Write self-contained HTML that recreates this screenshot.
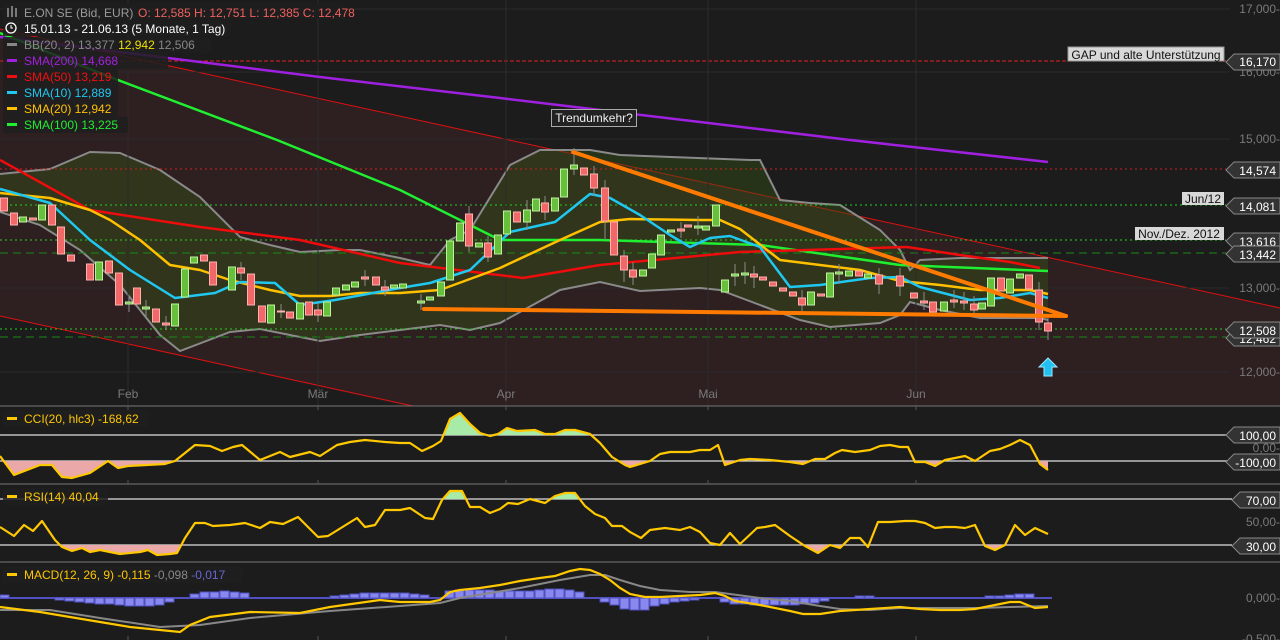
<!DOCTYPE html>
<html><head><meta charset="utf-8"><style>
html,body{margin:0;padding:0;background:#1c1c1c;width:1280px;height:640px;overflow:hidden}
svg{display:block;font-family:"Liberation Sans",sans-serif}
.r{fill:#f06868;stroke:#ffb0b0;stroke-width:1}
.g{fill:#66c03c;stroke:#c0f0a0;stroke-width:1}
.ax{fill:#7a7a7a;font-size:12px;text-anchor:end}
.tg{fill:#333;stroke:#888;stroke-width:1}
.tt{fill:#fff;font-size:12px;text-anchor:end}
.lg{font-size:12px}
</style></head><body>
<svg width="1280" height="640" viewBox="0 0 1280 640">
<defs>
<clipPath id="price"><rect x="0" y="0" width="1280" height="406"/></clipPath>
<clipPath id="cciL"><rect x="0" y="461" width="1280" height="23"/></clipPath>
<clipPath id="cciH"><rect x="0" y="406" width="1280" height="29"/></clipPath>
<clipPath id="rsiL"><rect x="0" y="545" width="1280" height="17"/></clipPath>
<clipPath id="rsiH"><rect x="0" y="484" width="1280" height="15"/></clipPath>
</defs>
<rect width="1280" height="640" fill="#1c1c1c"/>
<g clip-path="url(#price)">
<!-- channel -->
<polygon points="0,29 1280,308 1280,600 0,316" fill="#2e1f21"/>
<line x1="0" y1="29" x2="1280" y2="308" stroke="#e01010" stroke-width="1"/>
<line x1="0" y1="316" x2="1280" y2="595" stroke="#e01010" stroke-width="1"/>
<!-- grid -->
<g stroke="#2a2a2a" stroke-width="1">
<line x1="0" y1="9" x2="1230" y2="9"/><line x1="0" y1="72" x2="1230" y2="72"/><line x1="0" y1="139" x2="1230" y2="139"/><line x1="0" y1="288" x2="1230" y2="288"/><line x1="0" y1="372" x2="1230" y2="372"/>
</g>
<!-- BB fill -->
<polygon fill="rgba(50,80,20,0.45)" points="0,174 50,169 90,152 120,153 160,170 200,197 240,237 270,245 300,252 340,250 360,250 400,258 430,265 450,240 470,230 510,165 540,150 590,150 620,155 750,160 760,160 780,200 810,203 840,205 880,230 900,250 910,270 920,260 960,258 1020,258 1048,258 1048,320 1040,318 1000,318 980,318 940,310 910,302 900,315 880,323 830,327 800,320 760,305 720,290 700,288 640,291 600,282 560,290 500,323 470,330 440,325 400,330 360,335 320,341 260,329 230,332 180,351 160,335 120,285 80,250 40,225 0,212"/>
<g fill="none" stroke="#8a8a8a" stroke-width="2">
<polyline points="0,174 50,169 90,152 120,153 160,170 200,197 240,237 270,245 300,252 340,250 360,250 400,258 430,265 450,240 470,230 510,165 540,150 590,150 620,155 750,160 760,160 780,200 810,203 840,205 880,230 900,250 910,270 920,260 960,258 1020,258 1048,258"/>
<polyline points="0,212 40,225 80,250 120,285 160,335 180,351 230,332 260,329 320,341 360,335 400,330 440,325 470,330 500,323 560,290 600,282 640,291 700,288 720,290 760,305 800,320 830,327 880,323 900,315 910,302 940,310 980,318 1000,318 1040,318 1048,320"/>
</g>
<!-- horizontal level lines -->
<line x1="0" y1="61" x2="1226" y2="61" stroke="#e02020" stroke-dasharray="4,2"/>
<line x1="0" y1="169" x2="1226" y2="169" stroke="#d02020" stroke-dasharray="2,3"/>
<g stroke="#20d020" stroke-dasharray="2,3"><line x1="0" y1="205" x2="1226" y2="205"/><line x1="0" y1="240" x2="1226" y2="240"/><line x1="0" y1="329" x2="1226" y2="329"/></g>
<g stroke="#1a8a1a" stroke-dasharray="8,5"><line x1="0" y1="253" x2="1226" y2="253"/><line x1="0" y1="337" x2="1226" y2="337"/></g>
<!-- vertical grid -->
<g stroke="#2c2c2c"><line x1="128" y1="0" x2="128" y2="406"/><line x1="318" y1="0" x2="318" y2="406"/><line x1="506" y1="0" x2="506" y2="406"/><line x1="708" y1="0" x2="708" y2="406"/><line x1="916" y1="0" x2="916" y2="406"/></g>
<!-- MAs -->
<g fill="none" stroke-width="2.5" stroke-linejoin="round">
<polyline stroke="#a020e0" points="0,37 320,77 500,98 700,122 850,140 1048,162"/>
<polyline stroke="#20ee30" points="0,33 110,77 277,140 400,190 500,240 600,240 760,245 900,265 1048,271"/>
<polyline stroke="#ee0c0c" points="0,160 90,210 200,227 300,240 400,263 523,278 600,265 740,252 907,247 960,255 1010,262 1040,268"/>
<polyline stroke="#ffc000" points="0,193 50,198 90,210 110,220 140,240 170,265 200,270 230,280 270,290 300,296 330,296 360,293 400,293 440,290 500,268 560,240 600,222 630,219 700,220 720,220 740,229 780,260 820,265 860,270 900,281 940,285 980,290 1030,290 1048,294"/>
<polyline stroke="#20c8f0" points="0,189 50,203 90,240 130,270 175,298 215,293 240,282 275,283 300,305 335,300 400,288 430,283 470,270 510,232 555,222 590,194 610,198 640,215 670,235 690,247 710,238 730,236 760,247 790,287 820,285 870,278 900,277 920,287 970,300 1000,298 1030,293 1048,298"/>
</g>
<!-- wicks -->
<path stroke="#8a8a8a" stroke-width="1" fill="none" d="M129,295V312M146,300V317M166,316V330M241,262V280M281,304V318M318,303V322M365,270V286M385,280V296M421,294V310M469,206V252M488,236V262M527,200V230M545,196V220M574,148V175M594,166V196M605,180V240M624,250V282M633,262V285M681,222V238M698,216V235M735,264V286M745,262V284M754,266V288M802,290V312M839,264V284M879,268V294M900,268V296M924,292V310M954,290V308M964,292V310M974,296V316M1039,282V330M1048,318V340"/>
<!-- candles -->
<rect class="r" x="0.5" y="198" width="7" height="13"/><rect class="r" x="10.5" y="213" width="7" height="12"/><rect class="g" x="19.5" y="217" width="7" height="5"/><rect class="r" x="29.5" y="218" width="7" height="2"/><rect class="g" x="38.5" y="205" width="7" height="15"/><rect class="r" x="48.5" y="205" width="7" height="20"/><rect class="r" x="57.5" y="227" width="7" height="27"/><rect class="r" x="67.5" y="255" width="7" height="6"/><rect class="r" x="86.5" y="264" width="7" height="16"/><rect class="g" x="95.5" y="262" width="7" height="18"/><rect class="r" x="105.5" y="261" width="7" height="12"/><rect class="r" x="115.5" y="273" width="7" height="32"/><rect class="g" x="125.5" y="302" width="7" height="2"/><rect class="r" x="133.5" y="288" width="7" height="16"/><rect class="g" x="142.5" y="307" width="7" height="2"/><rect class="r" x="152.5" y="309" width="7" height="13"/><rect class="r" x="162.5" y="323" width="7" height="2"/><rect class="g" x="171.5" y="304" width="7" height="22"/><rect class="g" x="181.5" y="269" width="7" height="28"/><rect class="g" x="190.5" y="257" width="7" height="6"/><rect class="r" x="200.5" y="255" width="7" height="6"/><rect class="r" x="209.5" y="262" width="7" height="23"/><rect class="g" x="228.5" y="267" width="7" height="23"/><rect class="r" x="237.5" y="268" width="7" height="5"/><rect class="r" x="247.5" y="274" width="7" height="31"/><rect class="r" x="258.5" y="306" width="7" height="16"/><rect class="g" x="267.5" y="305" width="7" height="18"/><rect class="r" x="277.5" y="311" width="7" height="1"/><rect class="r" x="286.5" y="312" width="7" height="6"/><rect class="g" x="296.5" y="303" width="7" height="16"/><rect class="r" x="305.5" y="302" width="7" height="13"/><rect class="r" x="314.5" y="310" width="7" height="5"/><rect class="g" x="323.5" y="302" width="7" height="14"/><rect class="g" x="332.5" y="288" width="7" height="7"/><rect class="g" x="342.5" y="285" width="7" height="5"/><rect class="g" x="351.5" y="282" width="7" height="5"/><rect class="r" x="361.5" y="277" width="7" height="2"/><rect class="r" x="372.5" y="277" width="7" height="8"/><rect class="r" x="381.5" y="287" width="7" height="3"/><rect class="g" x="390.5" y="285" width="7" height="3"/><rect class="g" x="399.5" y="284" width="7" height="4"/><rect class="g" x="417.5" y="301" width="7" height="2"/><rect class="g" x="426.5" y="297" width="7" height="3"/><rect class="g" x="437.5" y="282" width="7" height="14"/><rect class="g" x="446.5" y="241" width="7" height="39"/><rect class="g" x="456.5" y="223" width="7" height="18"/><rect class="r" x="465.5" y="214" width="7" height="32"/><rect class="g" x="475.5" y="243" width="7" height="4"/><rect class="r" x="484.5" y="243" width="7" height="14"/><rect class="g" x="494.5" y="235" width="7" height="19"/><rect class="g" x="503.5" y="211" width="7" height="23"/><rect class="r" x="513.5" y="212" width="7" height="10"/><rect class="g" x="523.5" y="210" width="7" height="12"/><rect class="g" x="532.5" y="199" width="7" height="12"/><rect class="r" x="541.5" y="203" width="7" height="9"/><rect class="g" x="551.5" y="198" width="7" height="13"/><rect class="g" x="560.5" y="169" width="7" height="28"/><rect class="g" x="570.5" y="165" width="7" height="4"/><rect class="r" x="580.5" y="168" width="7" height="7"/><rect class="r" x="590.5" y="174" width="7" height="14"/><rect class="r" x="601.5" y="188" width="7" height="33"/><rect class="r" x="610.5" y="222" width="7" height="33"/><rect class="r" x="620.5" y="256" width="7" height="14"/><rect class="r" x="629.5" y="270" width="7" height="7"/><rect class="g" x="639.5" y="270" width="7" height="6"/><rect class="g" x="648.5" y="254" width="7" height="14"/><rect class="g" x="657.5" y="235" width="7" height="20"/><rect class="g" x="667.5" y="230" width="7" height="2"/><rect class="r" x="677.5" y="229" width="7" height="2"/><rect class="r" x="684.5" y="225" width="7" height="2"/><rect class="g" x="694.5" y="226" width="7" height="2"/><rect class="g" x="702.5" y="226" width="7" height="4"/><rect class="g" x="712.5" y="205" width="7" height="21"/><rect class="g" x="721.5" y="280" width="7" height="12"/><rect class="g" x="731.5" y="274" width="7" height="2"/><rect class="g" x="741.5" y="273" width="7" height="2"/><rect class="r" x="750.5" y="274" width="7" height="3"/><rect class="r" x="759.5" y="277" width="7" height="3"/><rect class="r" x="769.5" y="282" width="7" height="4"/><rect class="r" x="779.5" y="288" width="7" height="3"/><rect class="r" x="789.5" y="292" width="7" height="4"/><rect class="r" x="798.5" y="298" width="7" height="7"/><rect class="g" x="807.5" y="292" width="7" height="13"/><rect class="r" x="817.5" y="294" width="7" height="2"/><rect class="g" x="826.5" y="273" width="7" height="24"/><rect class="g" x="835.5" y="272" width="7" height="2"/><rect class="g" x="845.5" y="271" width="7" height="5"/><rect class="r" x="855.5" y="271" width="7" height="5"/><rect class="g" x="864.5" y="274" width="7" height="4"/><rect class="r" x="875.5" y="275" width="7" height="9"/><rect class="r" x="896.5" y="276" width="7" height="10"/><rect class="r" x="910.5" y="293" width="7" height="5"/><rect class="r" x="920.5" y="301" width="7" height="2"/><rect class="r" x="929.5" y="302" width="7" height="10"/><rect class="g" x="940.5" y="302" width="7" height="9"/><rect class="r" x="950.5" y="300" width="7" height="2"/><rect class="r" x="960.5" y="301" width="7" height="2"/><rect class="r" x="970.5" y="304" width="7" height="6"/><rect class="g" x="978.5" y="303" width="7" height="6"/><rect class="g" x="987.5" y="278" width="7" height="28"/><rect class="r" x="997.5" y="278" width="7" height="13"/><rect class="g" x="1006.5" y="279" width="7" height="14"/><rect class="g" x="1016.5" y="274" width="7" height="4"/><rect class="r" x="1025.5" y="275" width="7" height="14"/><rect class="r" x="1035.5" y="290" width="7" height="32"/><rect class="r" x="1044.5" y="323" width="7" height="8"/>
<!-- orange trend lines -->
<g stroke="#ff7a00" stroke-width="4" stroke-linecap="round"><line x1="573" y1="152" x2="1066" y2="316"/><line x1="424" y1="309" x2="1066" y2="316"/></g>
<!-- arrow -->
<polygon points="1048,358 1057,367 1052,367 1052,376 1044,376 1044,367 1039,367" fill="#20c0f0" stroke="#a0e8ff" stroke-width="1"/>
<!-- month labels -->
<g fill="#7a7a7a" font-size="12" text-anchor="middle"><text x="128" y="398">Feb</text><text x="318" y="398">Mär</text><text x="506" y="398">Apr</text><text x="708" y="398">Mai</text><text x="916" y="398">Jun</text></g>
</g>
<!-- label boxes -->
<rect x="551.5" y="109.5" width="85" height="17" fill="#222" stroke="#aaa"/>
<text x="594" y="122" fill="#eee" font-size="12" text-anchor="middle">Trendumkehr?</text>
<rect x="1068" y="47" width="156" height="14" fill="#d8d8d8" stroke="#999"/><text x="1146" y="59" fill="#111" font-size="12" text-anchor="middle">GAP und alte Unterstützung</text>
<rect x="1182" y="192" width="42" height="13" fill="#d8d8d8"/><text x="1203" y="203" fill="#111" font-size="12" text-anchor="middle">Jun/12</text>
<rect x="1135" y="227" width="89" height="13" fill="#d8d8d8"/><text x="1179" y="238" fill="#111" font-size="12" text-anchor="middle">Nov./Dez. 2012</text>
<!-- right axis -->
<text class="ax" x="1280" y="13">17,000-</text><text class="ax" x="1280" y="76">16,000-</text><text class="ax" x="1280" y="143">15,000-</text><text class="ax" x="1280" y="292">13,000-</text><text class="ax" x="1280" y="376">12,000-</text>
<text class="ax" x="1280" y="213">14,000-</text>
<g>
<polygon class="tg" points="1226,62 1234,54 1280,54 1280,70 1234,70"/><text class="tt" x="1276" y="66">16,170</text>
<polygon class="tg" points="1226,170 1234,162 1280,162 1280,178 1234,178"/><text class="tt" x="1276" y="175">14,574</text>
<polygon class="tg" points="1226,206 1234,198 1280,198 1280,214 1234,214"/><text class="tt" x="1276" y="211">14,081</text>
<polygon class="tg" points="1226,241 1234,233 1280,233 1280,249 1234,249"/><text class="tt" x="1276" y="246">13,616</text>
<polygon class="tg" points="1226,254 1234,246 1280,246 1280,262 1234,262"/><text class="tt" x="1276" y="259">13,442</text>
<polygon class="tg" points="1226,338 1234,330 1280,330 1280,346 1234,346"/><text class="tt" x="1276" y="343">12,462</text>
<polygon class="tg" points="1226,330 1234,322 1280,322 1280,338 1234,338"/><text class="tt" x="1276" y="335">12,508</text>
</g>
<!-- legend -->
<g fill="rgba(30,30,30,0.85)"><rect x="3" y="3" width="340" height="16"/><rect x="3" y="20" width="228" height="16"/><rect x="3" y="37" width="208" height="16"/><rect x="3" y="53" width="165" height="16"/><rect x="3" y="69" width="115" height="16"/><rect x="3" y="85" width="115" height="16"/><rect x="3" y="101" width="115" height="16"/><rect x="3" y="117" width="125" height="16"/></g>
<g class="lg">
<g stroke="#aaa" stroke-width="1.3" fill="none"><path d="M8,8V17M12,6V17M16,8V17"/></g>
<text x="24" y="17" fill="#9a9a9a">E.ON SE (Bid, EUR)</text><text x="138" y="17" fill="#f06060">O: 12,585  H: 12,751  L: 12,385  C: 12,478</text>
<circle cx="11" cy="28" r="5" fill="none" stroke="#fff" stroke-width="1.3"/><path d="M11,25V28H13" stroke="#fff" fill="none"/>
<text x="24" y="33" fill="#fff">15.01.13 - 21.06.13 (5 Monate, 1 Tag)</text>
<rect x="7" y="43" width="10" height="3" fill="#888"/><text x="24" y="49" fill="#888">BB(20, 2)  13,377  <tspan fill="#f0e000">12,942</tspan>  12,506</text>
<rect x="7" y="59" width="10" height="3" fill="#a020e0"/><text x="24" y="65" fill="#a020e0">SMA(200)  14,668</text>
<rect x="7" y="75" width="10" height="3" fill="#ee1010"/><text x="24" y="81" fill="#ee1010">SMA(50)  13,219</text>
<rect x="7" y="91" width="10" height="3" fill="#20c8f0"/><text x="24" y="97" fill="#20c8f0">SMA(10)  12,889</text>
<rect x="7" y="107" width="10" height="3" fill="#ffc000"/><text x="24" y="113" fill="#ffc000">SMA(20)  12,942</text>
<rect x="7" y="123" width="10" height="3" fill="#20ee30"/><text x="24" y="129" fill="#20ee30">SMA(100)  13,225</text>
</g>
<!-- separators -->
<g stroke="#777"><line x1="0" y1="406" x2="1280" y2="406"/><line x1="0" y1="484" x2="1280" y2="484"/><line x1="0" y1="562" x2="1280" y2="562"/></g>
<g stroke="#555"><path d="M128,406v4M318,406v4M506,406v4M708,406v4M916,406v4M128,480v4M318,480v4M506,480v4M708,480v4M916,480v4M128,636v4M318,636v4M506,636v4M708,636v4M916,636v4"/></g>
<!-- CCI -->
<g stroke="#ddd" stroke-width="1.3"><line x1="0" y1="435" x2="1230" y2="435"/><line x1="0" y1="461" x2="1230" y2="461"/><line x1="0" y1="499" x2="1232" y2="499"/><line x1="0" y1="545" x2="1232" y2="545"/></g>
<polygon clip-path="url(#cciL)" fill="#eaa8a8" points="0,456 14,475 40,465 52,465 62,477 72,478 90,473 108,461 118,468 128,466 165,464 175,461 195,445 210,446 222,451 233,447 242,445 260,460 280,452 290,457 310,452 320,456 337,445 350,442 365,440 385,442 400,443 410,443 422,451 433,446 441,441 450,419 460,413 470,424 480,433 490,436 498,434 507,428 517,431 535,430 545,434 555,434 565,430 575,430 590,434 600,443 612,457 625,465 630,467 650,461 660,454 670,452 690,452 700,450 710,450 718,445 725,465 740,460 750,459 770,460 790,462 803,464 815,459 825,459 835,453 842,450 855,452 870,450 880,446 890,445 900,447 908,447 915,462 925,462 935,466 945,460 965,456 975,461 990,451 1000,449 1010,445 1020,440 1030,445 1040,464 1048,470 1048,435 0,435"/>
<polygon clip-path="url(#cciH)" fill="#a8eaa8" points="0,456 14,475 40,465 52,465 62,477 72,478 90,473 108,461 118,468 128,466 165,464 175,461 195,445 210,446 222,451 233,447 242,445 260,460 280,452 290,457 310,452 320,456 337,445 350,442 365,440 385,442 400,443 410,443 422,451 433,446 441,441 450,419 460,413 470,424 480,433 490,436 498,434 507,428 517,431 535,430 545,434 555,434 565,430 575,430 590,434 600,443 612,457 625,465 630,467 650,461 660,454 670,452 690,452 700,450 710,450 718,445 725,465 740,460 750,459 770,460 790,462 803,464 815,459 825,459 835,453 842,450 855,452 870,450 880,446 890,445 900,447 908,447 915,462 925,462 935,466 945,460 965,456 975,461 990,451 1000,449 1010,445 1020,440 1030,445 1040,464 1048,470 1048,461 0,461"/>
<polyline fill="none" stroke="#ffc800" stroke-width="2.2" stroke-linejoin="round" points="0,456 14,475 40,465 52,465 62,477 72,478 90,473 108,461 118,468 128,466 165,464 175,461 195,445 210,446 222,451 233,447 242,445 260,460 280,452 290,457 310,452 320,456 337,445 350,442 365,440 385,442 400,443 410,443 422,451 433,446 441,441 450,419 460,413 470,424 480,433 490,436 498,434 507,428 517,431 535,430 545,434 555,434 565,430 575,430 590,434 600,443 612,457 625,465 630,467 650,461 660,454 670,452 690,452 700,450 710,450 718,445 725,465 740,460 750,459 770,460 790,462 803,464 815,459 825,459 835,453 842,450 855,452 870,450 880,446 890,445 900,447 908,447 915,462 925,462 935,466 945,460 965,456 975,461 990,451 1000,449 1010,445 1020,440 1030,445 1040,464 1048,470"/>
<!-- RSI -->
<polygon clip-path="url(#rsiL)" fill="#eaa8a8" points="0,527 14,536 24,525 33,531 42,521 55,540 62,547 72,551 82,548 90,552 100,550 120,554 140,552 148,550 157,555 170,554 177,553 185,538 195,523 205,523 213,526 230,525 245,523 260,528 270,522 283,524 298,517 318,537 328,536 357,518 365,527 375,525 385,510 400,510 410,508 425,518 433,519 442,500 450,491 462,491 470,507 480,507 490,513 500,509 508,503 518,504 530,499 545,503 555,496 565,493 575,493 585,506 595,514 605,518 612,526 622,526 630,532 641,538 650,530 665,528 680,530 690,527 700,532 710,543 720,545 730,533 740,544 757,528 765,527 775,525 790,536 805,546 818,553 830,545 840,548 850,538 860,538 868,547 878,522 890,522 905,521 915,521 925,523 935,528 945,527 955,527 965,528 975,525 985,546 995,550 1005,545 1015,525 1025,535 1035,528 1048,534 1048,499 0,499"/>
<polygon clip-path="url(#rsiH)" fill="#a8eaa8" points="0,527 14,536 24,525 33,531 42,521 55,540 62,547 72,551 82,548 90,552 100,550 120,554 140,552 148,550 157,555 170,554 177,553 185,538 195,523 205,523 213,526 230,525 245,523 260,528 270,522 283,524 298,517 318,537 328,536 357,518 365,527 375,525 385,510 400,510 410,508 425,518 433,519 442,500 450,491 462,491 470,507 480,507 490,513 500,509 508,503 518,504 530,499 545,503 555,496 565,493 575,493 585,506 595,514 605,518 612,526 622,526 630,532 641,538 650,530 665,528 680,530 690,527 700,532 710,543 720,545 730,533 740,544 757,528 765,527 775,525 790,536 805,546 818,553 830,545 840,548 850,538 860,538 868,547 878,522 890,522 905,521 915,521 925,523 935,528 945,527 955,527 965,528 975,525 985,546 995,550 1005,545 1015,525 1025,535 1035,528 1048,534 1048,545 0,545"/>
<polyline fill="none" stroke="#ffc800" stroke-width="2.2" stroke-linejoin="round" points="0,527 14,536 24,525 33,531 42,521 55,540 62,547 72,551 82,548 90,552 100,550 120,554 140,552 148,550 157,555 170,554 177,553 185,538 195,523 205,523 213,526 230,525 245,523 260,528 270,522 283,524 298,517 318,537 328,536 357,518 365,527 375,525 385,510 400,510 410,508 425,518 433,519 442,500 450,491 462,491 470,507 480,507 490,513 500,509 508,503 518,504 530,499 545,503 555,496 565,493 575,493 585,506 595,514 605,518 612,526 622,526 630,532 641,538 650,530 665,528 680,530 690,527 700,532 710,543 720,545 730,533 740,544 757,528 765,527 775,525 790,536 805,546 818,553 830,545 840,548 850,538 860,538 868,547 878,522 890,522 905,521 915,521 925,523 935,528 945,527 955,527 965,528 975,525 985,546 995,550 1005,545 1015,525 1025,535 1035,528 1048,534"/>
<!-- MACD -->
<line x1="0" y1="598" x2="1052" y2="598" stroke="#5050c0" stroke-width="2"/>
<path fill="#8888ee" stroke="#5050c0" stroke-width="1" d="M0,595h9v3h-9zM55,598h9v2h-9zM65,598h9v3h-9zM75,598h9v4h-9zM85,598h9v5h-9zM95,598h9v6h-9zM105,598h9v6h-9zM115,598h9v7h-9zM125,598h9v8h-9zM135,598h9v8h-9zM145,598h9v8h-9zM155,598h9v7h-9zM165,598h9v4h-9zM190,594h9v4h-9zM200,592h9v6h-9zM210,592h9v6h-9zM220,591h9v7h-9zM230,592h9v6h-9zM240,593h9v5h-9zM330,596h9v2h-9zM340,595h9v3h-9zM350,594h9v4h-9zM360,593h9v5h-9zM370,593h9v5h-9zM380,593h9v5h-9zM390,593h9v5h-9zM400,593h9v5h-9zM410,594h9v4h-9zM420,595h9v3h-9zM445,591h9v7h-9zM455,590h9v8h-9zM465,590h9v8h-9zM475,590h9v8h-9zM485,590h9v8h-9zM495,591h9v7h-9zM505,591h9v7h-9zM515,591h9v7h-9zM525,591h9v7h-9zM535,590h9v8h-9zM545,589h9v9h-9zM555,589h9v9h-9zM565,590h9v8h-9zM575,592h9v6h-9zM600,598h9v4h-9zM610,598h9v7h-9zM620,598h9v11h-9zM630,598h9v12h-9zM640,598h9v12h-9zM650,598h9v8h-9zM660,598h9v6h-9zM670,598h9v4h-9zM680,598h9v3h-9zM690,598h9v2h-9zM720,598h9v4h-9zM730,598h9v6h-9zM740,598h9v6h-9zM750,598h9v7h-9zM760,598h9v7h-9zM770,598h9v7h-9zM780,598h9v7h-9zM790,598h9v7h-9zM800,598h9v6h-9zM810,598h9v5h-9zM820,598h9v3h-9zM855,596h9v2h-9zM865,596h9v2h-9zM985,596h9v2h-9zM995,596h9v2h-9zM1005,595h9v3h-9zM1015,594h9v4h-9zM1025,594h9v4h-9z"/>
<polyline fill="none" stroke="#888" stroke-width="2" points="0,610 50,610 100,618 160,627 200,625 250,618 330,611 400,606 440,603 460,598 490,593 520,588 560,580 590,575 605,575 620,580 640,586 660,590 690,592 715,592 730,594 760,598 790,601 820,606 840,609 870,610 900,608 940,608 980,608 1010,607 1048,606"/>
<polyline fill="none" stroke="#ffc800" stroke-width="2.2" points="0,607 40,612 70,617 100,622 130,627 160,630 180,632 190,625 210,617 250,612 300,613 330,607 380,600 400,602 430,602 440,600 450,592 460,590 480,588 500,585 520,581 540,578 555,576 570,571 580,569 590,570 600,574 610,580 620,588 630,594 645,597 660,597 700,595 715,593 725,596 735,601 760,605 790,611 803,614 820,614 840,611 870,609 900,607 920,609 940,610 960,610 975,609 990,606 1010,602 1020,602 1035,608 1048,607"/>
<!-- sub legends -->
<g fill="rgba(30,30,30,0.85)"><rect x="3" y="410" width="145" height="17"/><rect x="3" y="488" width="105" height="17"/><rect x="3" y="566" width="240" height="17"/></g>
<g class="lg">
<rect x="7" y="417" width="10" height="3" fill="#ffc800"/><text x="24" y="423" fill="#ffc800">CCI(20, hlc3)  -168,62</text>
<rect x="7" y="495" width="10" height="3" fill="#ffc800"/><text x="24" y="501" fill="#ffc800">RSI(14)  40,04</text>
<rect x="7" y="573" width="10" height="3" fill="#ffc800"/><text x="24" y="579" fill="#ffc800">MACD(12, 26, 9)  -0,115  <tspan fill="#888">-0,098</tspan>  <tspan fill="#6868d0">-0,017</tspan></text>
</g>
<!-- sub axes -->
<text class="ax" x="1280" y="452">0,00-</text>
<polygon class="tg" points="1226,435 1234,427 1280,427 1280,443 1234,443"/><text class="tt" x="1276" y="440">100,00</text>
<polygon class="tg" points="1226,462 1234,454 1280,454 1280,470 1234,470"/><text class="tt" x="1276" y="467">-100,00</text>
<text class="ax" x="1280" y="526">50,00-</text>
<polygon class="tg" points="1232,500 1240,492 1280,492 1280,508 1240,508"/><text class="tt" x="1276" y="505">70,00</text>
<polygon class="tg" points="1232,546 1240,538 1280,538 1280,554 1240,554"/><text class="tt" x="1276" y="551">30,00</text>
<text class="ax" x="1280" y="602">0,000-</text>
<text class="ax" x="1280" y="643">-0,500-</text>
</svg>
</body></html>
